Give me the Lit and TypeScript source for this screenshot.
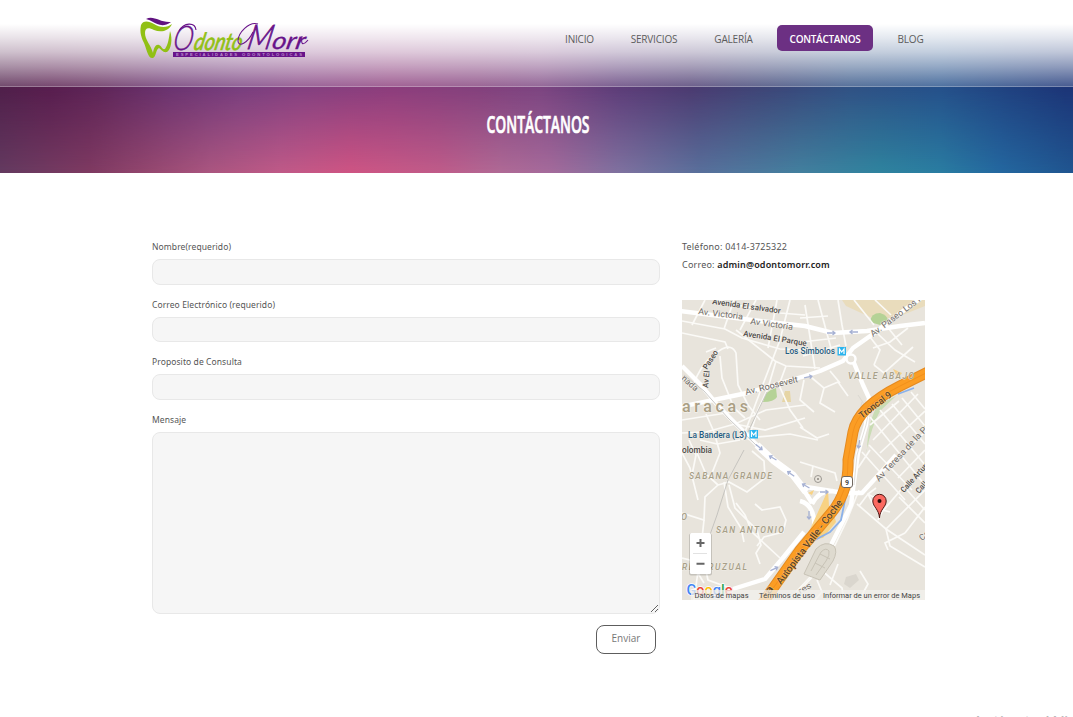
import { LitElement, html, css, svg } from "lit";
import { customElement } from "lit/decorators.js";

const minorRoads = [
  "M705 300L692 325M734 300L724 329M756 300L740 330M777 300L768 348M790 300L780 340L757 400L742 440",
  "M712 298L737 305L780 313L805 315",
  "M682 333L725 342L728 349M682 321L725 329L742 338L780 349L830 351",
  "M693 387Q700 362 722 349Q732 344 736 353L738 385L748 405L760 420",
  "M720 356L722 378L734 408L745 418M706 352L716 348M736 330L775 361L786 366L820 368",
  "M776 361L768 388L758 410L748 440M786 366L779 385L790 410L803 428",
  "M682 420L707 416L733 412M682 433L706 432L735 424L766 410L805 405M735 424L765 430L805 418M748 438L790 434L818 440",
  "M706 414L714 432L720 453L710 478M689 440L696 455L692 475M700 440L717 444L740 440",
  "M805 305L815 369M818 300L826 330L832 352M838 300L842 325L846 346M800 318L828 316M802 342L836 338M803 356L840 345",
  "M854 300L874 325M875 300L891 315M870 337L880 350L874 365M878 334L895 350L915 362M889 329L902 345M874 365L884 373L913 347M873 348L890 342L908 328",
  "M812 378L824 388L820 403L835 412M824 388L838 382L848 396M804 380L800 400L814 412M830 371L840 383M800 427L817 438L829 434",
  "M682 453L690 468L698 500M697 453L706 474L718 485M718 485L705 497L704 520L682 513M718 485L729 482L747 492L765 478L764 461L752 451",
  "M724 482L728 507L741 528L744 542M729 485L735 508L757 530L761 545L756 553L760 564M736 503L745 515L752 532L780 558",
  "M755 504L762 510L780 507L786 520L783 532L764 537L757 546",
  "M704 520L701 548L708 580L730 588M701 550L694 600M682 558L690 560L704 583",
  "M857 504L886 529L925 555M859 506L868 494L882 502M876 488L868 494L875 508L890 512M878 520L882 512L905 485M886 529L925 490",
  "M905 533L925 507M886 529L890 546L925 567M888 550L885 543L905 533",
  "M870 417L925 485M880 410L925 465M892 404L925 444M902 398L925 426M911 392L925 409M870 425L899 401M873 440L918 394M880 453L925 411M888 468L925 432M898 478L925 450M899 497L925 523M907 490L925 510",
  "M862 452L905 500M869 445L912 490M858 468L870 450",
  "M800 462L835 473L837 481M813 466L811 477M833 549L820 569L800 590M820 569L842 588L844 600M860 571L868 584L862 595L850 600M838 564L830 585M815 600L822 592L817 580",
  "M859 490L847 520L835 545L812 575L796 592",
];

const mainRoads = [
  "M680 311L760 321L805 326L833 333L867 331L900 326L925 323",
  "M680 407L747 393L805 376L820 371L843 361L853 348L873 334L907 308L921 298",
  "M682 366L700 384L720 408L757 445L774 461L793 475L805 492L812 503",
  "M852 358L863 385L869 398L866 425L858 453L854 482L851 505L831 545",
  "M848 493L862 493L882 471L896 455",
  "M733 589L765 579L782 559L804 532",
  "M800 486Q825 490 844 493M800 501Q817 505 814 535L804 551M812 504Q819 490 833 491",
];

interface MapLabel {
  x: number; y: number; r: number; w: number; s: number; c: string; t: string;
}
const labels: MapLabel[] = [
  { x: 712, y: 304, r: 8, w: 69, s: 8, c: "road", t: "Avenida El salvador" },
  { x: 698, y: 314, r: 7, w: 45, s: 8.5, c: "road soft", t: "Av. Victoria" },
  { x: 750, y: 324, r: 8, w: 43, s: 8.5, c: "road soft", t: "Av Victoria" },
  { x: 743, y: 336, r: 9, w: 64, s: 8, c: "road", t: "Avenida El Parque" },
  { x: 746, y: 395, r: -14, w: 54, s: 8.8, c: "road soft", t: "Av. Roosevelt" },
  { x: 873, y: 337, r: -37, w: 60, s: 8.8, c: "road soft", t: "Av. Paseo Los I" },
  { x: 785, y: 354, r: 0, w: 50, s: 8.5, c: "metro", t: "Los Símbolos" },
  { x: 688, y: 438, r: 0, w: 59, s: 8.5, c: "metro", t: "La Bandera (L3)" },
  { x: 682, y: 453, r: 0, w: 30, s: 8.5, c: "road", t: "olombia" },
  { x: 682, y: 412, r: 0, w: 66, s: 16, c: "city", t: "aracas" },
  { x: 848, y: 379, r: 0, w: 66, s: 8.5, c: "area", t: "VALLE ABAJO" },
  { x: 689, y: 479, r: 0, w: 83, s: 8.5, c: "area", t: "SABANA GRANDE" },
  { x: 716, y: 533, r: 0, w: 68, s: 8.5, c: "area", t: "SAN ANTONIO" },
  { x: 682, y: 570, r: 0, w: 65, s: 8.5, c: "area", t: "REPARUZUAL" },
  { x: 681, y: 520, r: 0, w: 7, s: 9, c: "area", t: "O" },
  { x: 681, y: 379, r: 42, w: 19, s: 8.5, c: "road soft", t: "nada" },
  { x: 862, y: 419, r: -37, w: 38, s: 9.5, c: "road on-way", t: "Troncal 9" },
  { x: 781, y: 585, r: -53, w: 103, s: 10, c: "road on-way", t: "Autopista Valle - Coche" },
  { x: 879, y: 482, r: -47, w: 76, s: 8.8, c: "road soft", t: "Av Teresa de la Pa" },
  { x: 904, y: 493, r: -48, w: 39, s: 8, c: "road", t: "Calle Arturo" },
  { x: 919, y: 494, r: -48, w: 13, s: 8, c: "road", t: "Call" },
  { x: 922, y: 541, r: -40, w: 10, s: 8.5, c: "road soft", t: "Ca" },
  { x: 769, y: 595, r: -53, w: 8, s: 10, c: "road on-way", t: "a" },
  { x: 800, y: 594, r: -30, w: 14, s: 8, c: "road soft", t: "res" },
];

@customElement("site-map")
export class SiteMap extends LitElement {
  static styles = css`
    :host { display: block; height: 300px; }
    svg { display: block; width: 243px; height: 300px; }
    text { font-family: Roboto, sans-serif; stroke-linejoin: round; }
    .minor { fill: none; stroke: #fbfaf7; stroke-width: 1.7; }
    .main { fill: none; stroke: #fff; stroke-width: 4.4; stroke-linejoin: round; }
    .road { fill: #4c4946; stroke: #f4f1ebb0; stroke-width: 1.2; paint-order: stroke; font-weight: 500; }
    .soft { fill: #6f6b67; font-weight: 400; }
    .on-way { stroke: #fcb95c; stroke-width: 1; fill: #5b4326; }
    .metro { fill: #245b80; stroke: #f4f1ebb0; stroke-width: 1.2; paint-order: stroke; font-weight: 500; }
    .area { fill: #a79f88; font-style: italic; font-weight: 500; stroke: #f4f1ebb0; stroke-width: 1; paint-order: stroke; }
    .city { fill: #aa9f84; stroke: #f4f1eb; stroke-width: 1.5; paint-order: stroke; font-weight: 500; }
    .legal { fill: #444; font-size: 7.9px; }
  `;

  private label(l: MapLabel) {
    return svg`<text class=${l.c} transform="translate(${l.x} ${l.y}) rotate(${l.r})" font-size=${l.s}
      textLength=${l.w} lengthAdjust=${l.c === "city" || l.c === "area" ? "spacing" : "spacingAndGlyphs"}>${l.t}</text>`;
  }

  private metro(x: number, y: number) {
    return svg`<rect x=${x} y=${y} width="8.5" height="8.5" fill="#2bb4ee"/>
      <path d="M${x + 2} ${y + 7}V${y + 2}L${x + 4.2} ${y + 5}L${x + 6.5} ${y + 2}V${y + 7}" fill="none" stroke="#fff" stroke-width="1.2"/>`;
  }

  private arrow(x: number, y: number, r: number) {
    return svg`<path transform="translate(${x} ${y}) rotate(${r})" d="M-4 0H4M1.5 -2L4 0L1.5 2" fill="none" stroke="#a6b1d3" stroke-width="1.3"/>`;
  }

  render() {
    return html`<svg viewBox="682 300 243 300">
      <rect x="682" y="300" width="243" height="300" fill="#e8e4dc"/>
      <path d="M842 300H925V306L895 318L872 318L846 306Z" fill="#e9dcbc"/>
      <path d="M870 322Q871 313 880 313Q887 315 888 320L880 325Z" fill="#b5d296"/>
      <path d="M763 402Q764 391 776 388L777 397Q774 402 763 402Z" fill="#b5d296"/>
      <path d="M782 402L785 391L790 391L791 402Z" fill="#e6d5a5"/>
      <path d="M893 369L902 373L898 378Z" fill="#f4cf87"/>
      <path d="M867 450Q868 420 878 405L896 396L880 411Q872 425 866 453Z" fill="#c9dcb4"/>
      <path d="M846 577L856 574L859 580L850 588L844 584Z" fill="#dad6ce"/>
      <g class="minor">${minorRoads.map((d) => svg`<path d=${d}/>`)}</g>
      <g class="main">${mainRoads.map((d) => svg`<path d=${d}/>`)}</g>
      <path d="M757 445L774 461L793 475L806 492" fill="none" stroke="#fff" stroke-width="7"/>
      <circle cx="851" cy="359" r="4.500" fill="#e8e4dc" stroke="#fff" stroke-width="2.500"/>
      <path d="M684 375L704 391L728 418L757 446M767 392L748 432M744 450L728 480L717 515L701 560" fill="none" stroke="#bdbbb8" stroke-width=".8"/>
      <path d="M871 401L866 425L857 455L854 485M862 402L851 445M858 395L868 410" fill="none" stroke="#d6d2cb" stroke-width=".7"/>
      <path d="M828 490L818 512L805 540L823 538L836 522L833 510L829 506Z" fill="#f8d283"/>
      <path d="M808 493L814 490L812 495Z" fill="#f8d283"/>
      <path d="M845 500L841 520L830 532L813 541L798 558M898 394L914 388" fill="none" stroke="#8ab1ea" stroke-width="1.8"/>
      <path d="M804 574L816 549Q825 540 834 546Q838 551 833 561L820 580Z" fill="#dedacf" stroke="#c8c3b6" stroke-width="1"/>
      <path d="M811 571L821 552Q826 547 829 551Q830 555 826 561L816 575M815 563L825 568M820 554L830 559" fill="none" stroke="#c8c3b6" stroke-width="1"/>
      <path d="M932 370L900 386Q858 407 853 432L848 460Q849 491 832 512L800 550L762 604" fill="none" stroke="#e48a20" stroke-width="11"/>
      <path d="M932 370L900 386Q858 407 853 432L848 460Q849 491 832 512L800 550L762 604" fill="none" stroke="#fb9d24" stroke-width="9"/>
      <path d="M932 370L900 386Q858 407 853 432L848 460Q849 491 832 512L800 550L762 604" fill="none" stroke="#f08d1b" stroke-width=".8"/>
      ${this.arrow(831, 333, 0)} ${this.arrow(854, 332, 180)} ${this.arrow(808, 377, -12)} ${this.arrow(859, 444, 100)}
      ${this.arrow(773, 458, 210)} ${this.arrow(791, 474, 215)} ${this.arrow(774, 569, -25)} ${this.arrow(806, 486, 210)}
      ${this.arrow(824, 492, 0)} ${this.arrow(809, 515, 90)} ${this.arrow(759, 447, 40)}
      <circle cx="818" cy="479" r="3.500" fill="#e8e4dc" stroke="#9b9791"/><circle cx="818" cy="479" r="1" fill="#8b8781"/>
      ${labels.map((l) => this.label(l))}
      <text class="road" transform="translate(708 388) rotate(-84)" font-size="8" textLength="17" lengthAdjust="spacingAndGlyphs">Av El</text>
      <text class="road" transform="translate(707 370) rotate(-57)" font-size="8" textLength="21" lengthAdjust="spacingAndGlyphs">Paseo</text>
      ${this.metro(837.5, 347)} ${this.metro(749.5, 430)}
      <rect x="841.500" y="476.500" width="11" height="11" rx="2.500" fill="#fff" stroke="#706860"/>
      <text x="845" y="484.500" font-size="7" font-weight="700" fill="#444">9</text>
      <path d="M879.500 518C879 509 872.800 507 872.800 501A6.700 6.700 0 0 1 886.200 501C886.200 507 880 509 879.500 518Z" fill="#fb6960" stroke="#4a1512" stroke-width="1"/>
      <circle cx="879.500" cy="501" r="2" fill="#250a08"/>
      <rect x="689" y="533.500" width="23" height="42" rx="2" fill="#000" opacity=".15"/>
      <rect x="690" y="533" width="21" height="41" rx="1.500" fill="#fff"/>
      <path d="M693 553.500H707" stroke="#e2e2e2"/>
      <path d="M696.500 543H704.500M700.500 539V547M696.500 563.700H704.500" stroke="#666" stroke-width="2"/>
      <text x="686.500" y="595" font-size="15.500" font-weight="500" textLength="46" lengthAdjust="spacingAndGlyphs" stroke="#fff" stroke-width="1.500" paint-order="stroke"><tspan fill="#4285f4">G</tspan><tspan fill="#ea4335">o</tspan><tspan fill="#fbbc05">o</tspan><tspan fill="#4285f4">g</tspan><tspan fill="#34a853">l</tspan><tspan fill="#ea4335">e</tspan></text>
      <rect x="691" y="590" width="234" height="10" fill="#f3f1ed" opacity=".75"/>
      <text class="legal" x="694.500" y="598" textLength="54" lengthAdjust="spacingAndGlyphs">Datos de mapas</text>
      <text class="legal" x="759" y="598" textLength="56" lengthAdjust="spacingAndGlyphs">Términos de uso</text>
      <text class="legal" x="823" y="598" textLength="97" lengthAdjust="spacingAndGlyphs">Informar de un error de Maps</text>
    </svg>`;
  }
}

@customElement("app-root")
export class AppRoot extends LitElement {
  static styles = css`
    :host {
      display: block; position: relative; height: 717px; overflow: hidden; background: #fff;
      font-family: "Open Sans", "Noto Sans", sans-serif; color: #555;
      --top-row: linear-gradient(90deg, #4f1f4a 0, #571d4e 50px, #5e2558 100px, #6a3370 170px, #783e7e 240px, #834080 300px, #8b3d7c 390px, #82407c 480px, #7b4480 540px, #5c3c78 620px, #4b3a70 690px, #3e4476 760px, #305184 850px, #25508a 940px, #1c3577 1065px);
      --low-row: linear-gradient(90deg, #643a60 0, #7f3a62 90px, #964870 150px, #ab5680 210px, #c05a88 280px, #cf5584 350px, #c05c8a 440px, #b06a96 500px, #a56b9c 550px, #7f72a0 620px, #59709c 700px, #43809f 800px, #2f849f 880px, #2a7da2 940px, #2468a0 1000px, #205590 1073px);
    }
    * { box-sizing: border-box; }
    header {
      height: 87px; padding: 14px 137px 0; display: flex; justify-content: space-between;
      background: linear-gradient(180deg, #fff 24px, rgba(255,255,255,.87) 38px, rgba(255,255,255,.72) 52px, rgba(255,255,255,.5) 67px, rgba(255,255,255,.2) 86px), var(--top-row);
      border-bottom: 1px solid #ffffff45; background-origin: border-box;
    }
    .logo { width: 176px; height: 48px; display: block; }
    nav { display: flex; padding-top: 11px; height: 37px; }
    nav a { display: flex; align-items: center; justify-content: center; font-size: 10px; letter-spacing: -.2px; color: #5c5c5c; height: 26px; padding-top: 1px; white-space: nowrap; }
    .home { width: 53px; } .services { width: 96px; } .gallery { width: 63px; } .blog { width: 51px; margin-left: 12px; }
    nav .active { width: 96px; margin-left: 12px; background: #6c3083; border-radius: 5px; color: #fff; font-weight: 600; letter-spacing: -.3px; }
    .banner { height: 86px; position: relative; background: var(--low-row); display: flex; justify-content: center; }
    .banner::before { content: ""; position: absolute; inset: 0; background: var(--top-row); mask-image: linear-gradient(#000, transparent); -webkit-mask-image: linear-gradient(#000, transparent); }
    h1 { margin: 0 0 0 3px; position: relative; }
    h1 svg { display: block; width: 110px; height: 86px; }
    main { display: flex; gap: 22px; padding: 64px 148px 0 152px; }
    form { width: 508px; display: flex; flex-direction: column; }
    .field { height: 57.67px; }
    label { display: block; height: 22px; line-height: 19px; font-size: 8.5px; letter-spacing: .09px; font-family: "Noto Sans", sans-serif; }
    input, textarea { display: block; width: 508px; height: 25.5px; margin: 0; background: #f6f6f6; border: 1px solid #e8e8e8; border-radius: 8px; outline: 0; }
    textarea { height: 182px; }
    .message { height: 204px; }
    button { align-self: flex-end; margin: 11px 4px 0 0; width: 60px; height: 29px; padding: 0 0 3px; background: #fff; border: 1px solid #5d5d5d; border-radius: 8px; color: #777; font: 10px "Open Sans", sans-serif; }
    aside { width: 243px; }
    p { margin: 0; height: 18px; line-height: 19px; font-size: 9px; letter-spacing: .2px; white-space: nowrap; font-family: "Noto Sans", sans-serif; }
    strong { color: #222; font-weight: 600; letter-spacing: .16px; }
    site-map { margin-top: 27px; }
    .watermark { position: absolute; left: 972px; top: 708px; white-space: nowrap; font-size: 19px; letter-spacing: -.1px; line-height: 28px; color: #b9b9b9; }
  `;

  render() {
    return html`
      <header>
        <svg class="logo" viewBox="137 14 176 48">
          <path d="M141 25C143 20 149 21 154 24C160 28 167 28 172 24C169 31 161 33 154 30C148 27 145 28 145 33C145 40 151 45 153 53C154 47 156 44 159 45C162 46 162 50 165 49C168 45 169 38 170 31C173 39 171 50 167 52C163 53 161 49 159 48C156 49 156 57 153 58C148 59 147 50 144 43C140 35 140 30 141 25Z" fill="#91c015"/>
          <path d="M146 19C154 15 160 23 171 22C163 28 157 24 153 22Q150 20 146 19Z" fill="#601280"/>
          <g font-family="Lato, sans-serif" font-style="italic">
            <text transform="translate(172 50) skewX(-9)" font-size="34" font-weight="300" fill="#68138a" stroke="#68138a" stroke-width=".4" textLength="20" lengthAdjust="spacingAndGlyphs">O</text>
            <text transform="translate(193 49.500) skewX(-12)" font-size="24" fill="#91c015" stroke="#91c015" stroke-width=".7" textLength="48" lengthAdjust="spacingAndGlyphs">donto</text>
            <text transform="translate(246 49) skewX(-12)" font-size="34" font-weight="300" fill="#68138a" stroke="#68138a" stroke-width=".8" textLength="25" lengthAdjust="spacingAndGlyphs">M</text>
            <text transform="translate(271 48.500) skewX(-12)" font-size="24" fill="#68138a" stroke="#68138a" stroke-width=".3" textLength="33" lengthAdjust="spacingAndGlyphs">orr</text>
          </g>
          <path d="M258 24C249 21 238 33 238 41C238 48 248 43 253 32M302 36Q300 49 308 40M179 31C184 22 195 22 196 30" fill="none" stroke="#68138a" stroke-width="1.100"/>
          <rect x="173" y="52" width="132" height="5" fill="#68138a"/>
          <text x="176" y="56" font-family="Liberation Sans, sans-serif" font-weight="700" font-size="4.200" fill="#b98bca" textLength="126" lengthAdjust="spacing">ESPECIALIDADES ODONTOLOGICAS</text>
        </svg>
        <nav>
          <a class="home">INICIO</a><a class="services">SERVICIOS</a><a class="gallery">GALERÍA</a>
          <a class="active">CONTÁCTANOS</a><a class="blog">BLOG</a>
        </nav>
      </header>
      <section class="banner">
        <h1><svg viewBox="0 0 110 86"><text x="3.500" y="45.800" font-family="Open Sans, sans-serif" font-weight="600" font-size="23.500" fill="#fff" stroke="#fff" stroke-width=".7" textLength="103" lengthAdjust="spacingAndGlyphs">CONTÁCTANOS</text></svg></h1>
      </section>
      <main>
        <form>
          <div class="field"><label>Nombre(requerido)</label><input /></div>
          <div class="field"><label>Correo Electrónico (requerido)</label><input /></div>
          <div class="field"><label>Proposito de Consulta</label><input /></div>
          <div class="message"><label>Mensaje</label><textarea></textarea></div>
          <button type="button">Enviar</button>
        </form>
        <aside>
          <p>Teléfono: 0414-3725322</p>
          <p>Correo: <strong>admin@odontomorr.com</strong></p>
          <site-map></site-map>
        </aside>
      </main>
      <div class="watermark">Activate Windows</div>
    `;
  }
}
